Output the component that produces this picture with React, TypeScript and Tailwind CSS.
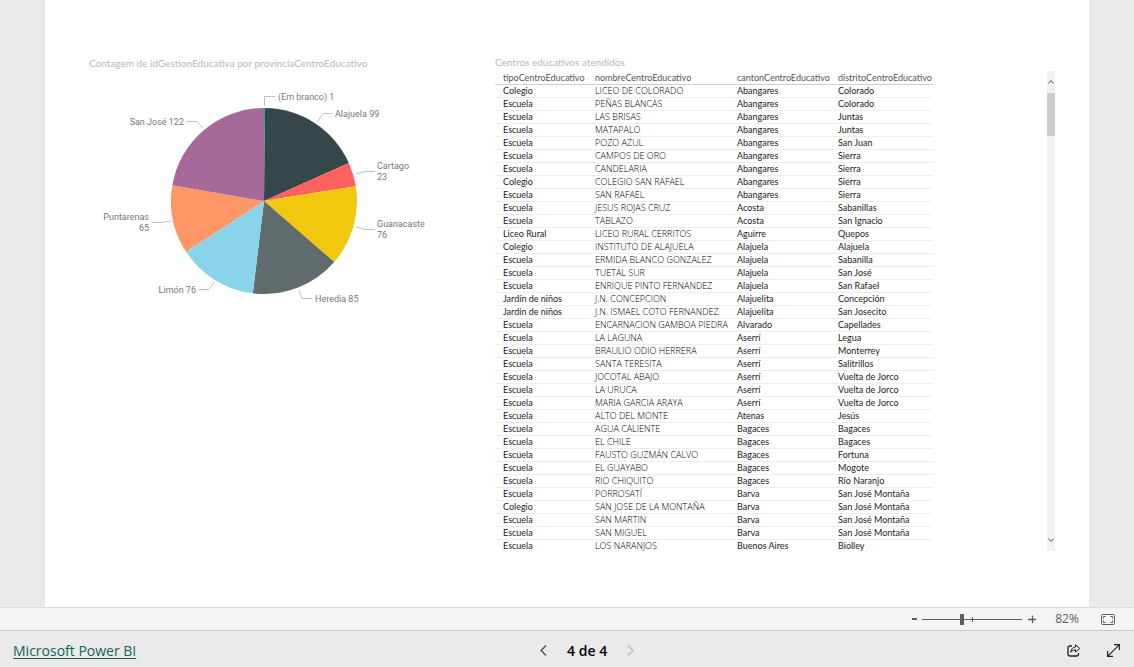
import { useState } from "react";

const slices = [
    { name: "(Em branco)", value: 1, color: "#01b8aa" },
    { name: "Alajuela", value: 99, color: "#374649" },
    { name: "Cartago", value: 23, color: "#fd625e" },
    { name: "Guanacaste", value: 76, color: "#f2c80f" },
    { name: "Heredia", value: 85, color: "#5f6b6d" },
    { name: "Limón", value: 76, color: "#8ad4eb" },
    { name: "Puntarenas", value: 65, color: "#fe9666" },
    { name: "San José", value: 122, color: "#a66999" },
];

// label lines, text position and leader line of every slice
const labels = [
    { lines: ["(Em branco) 1"], x: 189, y: 20, end: false, leader: "175.5,26 175.5,16.5 186,16.5" },
    { lines: ["Alajuela 99"], x: 246, y: 37, end: false, leader: "228,42 234,33.5 243,33.5" },
    { lines: ["Cartago", "23"], x: 288, y: 89, end: false, leader: "267,94 276,91.5 286,91.5" },
    { lines: ["Guanacaste", "76"], x: 288, y: 147, end: false, leader: "267,147 276,149.5 286,149.5" },
    { lines: ["Heredia 85"], x: 226, y: 222, end: false, leader: "210,210 213,218.5 223,218.5" },
    { lines: ["Limón 76"], x: 107, y: 213, end: true, leader: "125,202 120,209.5 110,209.5" },
    { lines: ["Puntarenas", "65"], x: 60, y: 140, end: true, leader: "82,141 73,142.5 63,142.5" },
    { lines: ["San José 122"], x: 95, y: 45, end: true, leader: "114,48 108,41.5 98,41.5" },
];

const columns = [
    { name: "tipoCentroEducativo", width: "w-[92px]" },
    { name: "nombreCentroEducativo", width: "w-[142px]" },
    { name: "cantonCentroEducativo", width: "w-[101px]" },
    { name: "distritoCentroEducativo", width: "w-[103px]" },
];

const rows = [
    ["Colegio", "LICEO DE COLORADO", "Abangares", "Colorado"],
    ["Escuela", "PEÑAS BLANCAS", "Abangares", "Colorado"],
    ["Escuela", "LAS BRISAS", "Abangares", "Juntas"],
    ["Escuela", "MATAPALO", "Abangares", "Juntas"],
    ["Escuela", "POZO AZUL", "Abangares", "San Juan"],
    ["Escuela", "CAMPOS DE ORO", "Abangares", "Sierra"],
    ["Escuela", "CANDELARIA", "Abangares", "Sierra"],
    ["Colegio", "COLEGIO SAN RAFAEL", "Abangares", "Sierra"],
    ["Escuela", "SAN RAFAEL", "Abangares", "Sierra"],
    ["Escuela", "JESUS ROJAS CRUZ", "Acosta", "Sabanillas"],
    ["Escuela", "TABLAZO", "Acosta", "San Ignacio"],
    ["Liceo Rural", "LICEO RURAL CERRITOS", "Aguirre", "Quepos"],
    ["Colegio", "INSTITUTO DE ALAJUELA", "Alajuela", "Alajuela"],
    ["Escuela", "ERMIDA BLANCO GONZALEZ", "Alajuela", "Sabanilla"],
    ["Escuela", "TUETAL SUR", "Alajuela", "San José"],
    ["Escuela", "ENRIQUE PINTO FERNANDEZ", "Alajuela", "San Rafael"],
    ["Jardín de niños", "J.N. CONCEPCION", "Alajuelita", "Concepción"],
    ["Jardín de niños", "J.N. ISMAEL COTO FERNANDEZ", "Alajuelita", "San Josecito"],
    ["Escuela", "ENCARNACION GAMBOA PIEDRA", "Alvarado", "Capellades"],
    ["Escuela", "LA LAGUNA", "Aserrí", "Legua"],
    ["Escuela", "BRAULIO ODIO HERRERA", "Aserrí", "Monterrey"],
    ["Escuela", "SANTA TERESITA", "Aserrí", "Salitrillos"],
    ["Escuela", "JOCOTAL ABAJO", "Aserrí", "Vuelta de Jorco"],
    ["Escuela", "LA URUCA", "Aserrí", "Vuelta de Jorco"],
    ["Escuela", "MARIA GARCIA ARAYA", "Aserrí", "Vuelta de Jorco"],
    ["Escuela", "ALTO DEL MONTE", "Atenas", "Jesús"],
    ["Escuela", "AGUA CALIENTE", "Bagaces", "Bagaces"],
    ["Escuela", "EL CHILE", "Bagaces", "Bagaces"],
    ["Escuela", "FAUSTO GUZMÁN CALVO", "Bagaces", "Fortuna"],
    ["Escuela", "EL GUAYABO", "Bagaces", "Mogote"],
    ["Escuela", "RIO CHIQUITO", "Bagaces", "Río Naranjo"],
    ["Escuela", "PORROSATÍ", "Barva", "San José Montaña"],
    ["Colegio", "SAN JOSE DE LA MONTAÑA", "Barva", "San José Montaña"],
    ["Escuela", "SAN MARTIN", "Barva", "San José Montaña"],
    ["Escuela", "SAN MIGUEL", "Barva", "San José Montaña"],
    ["Escuela", "LOS NARANJOS", "Buenos Aires", "Biolley"],
];

const total = slices.reduce((sum, s) => sum + s.value, 0);
const cx = 175;
const cy = 121;
const radius = 93;

const point = (value: number) => {
    const angle = (value / total) * Math.PI * 2;
    return `${cx + radius * Math.sin(angle)} ${cy - radius * Math.cos(angle)}`;
};

const PieChart = () => {
    let sum = 0;
    return (
        <svg
            width="350"
            height="240"
            role="img"
            aria-label="Contagem de idGestionEducativa por provinciaCentroEducativo"
        >
            {slices.map((s) => {
                const from = point(sum);
                sum += s.value;
                return (
                    <path
                        key={s.name}
                        d={`M${cx} ${cy}L${from}A${radius} ${radius} 0 0 1 ${point(sum)}Z`}
                        fill={s.color}
                    />
                );
            })}
            {labels.map((l) => (
                <g key={l.lines[0]}>
                    <polyline points={l.leader} fill="none" stroke="#c0c0c0" />
                    {l.lines.map((line, i) => (
                        <text
                            key={line}
                            x={l.x}
                            y={l.y + i * 11}
                            textAnchor={l.end ? "end" : "start"}
                            className="fill-[#777777] font-['Roboto',sans-serif] text-[9px]"
                        >
                            {line}
                        </text>
                    ))}
                </g>
            ))}
        </svg>
    );
};

const CentersTable = () => (
    <table className="w-[438px] table-fixed border-collapse text-left font-['Lato',sans-serif] text-[9px] leading-[12px] whitespace-nowrap">
        <thead>
            <tr className="border-b border-[#d0d0d0] text-[#555555]">
                {columns.map((c) => (
                    <th key={c.name} className={`${c.width} p-0 pt-px pl-2 font-normal`}>
                        {c.name}
                    </th>
                ))}
            </tr>
        </thead>
        <tbody className="text-[#222222]">
            {rows.map(([tipo, nombre, canton, distrito]) => (
                <tr key={nombre} className="border-b border-[#eeeeee]">
                    <td className="p-0 pl-2">{tipo}</td>
                    <td className="p-0 pl-2 font-['Open_Sans',sans-serif] font-light text-black">{nombre}</td>
                    <td className="p-0 pl-2">{canton}</td>
                    <td className="p-0 pl-2">{distrito}</td>
                </tr>
            ))}
        </tbody>
    </table>
);

const ScrollBar = () => (
    <div className="flex w-2 flex-col items-center bg-[#f1f1f1] text-[#505050]">
        <svg width="8" height="22" fill="none" stroke="currentColor">
            <path d="M1.5 12.5L4 9.5L6.5 12.5" />
        </svg>
        <div className="h-[43px] w-full bg-[#cdcdcd]" />
        <svg width="8" height="22" fill="none" stroke="currentColor" className="mt-auto">
            <path d="M1.5 9.5L4 12.5L6.5 9.5" />
        </svg>
    </div>
);

const ZoomBar = () => {
    const [zoom, setZoom] = useState(40);
    return (
        <div className="flex h-[23px] items-center justify-end border-t border-[#dcdcdc] bg-[#f4f4f4] pr-[18px] text-[#605e5c]">
            <button aria-label="Reduzir" className="flex h-4 w-4 items-center justify-center">
                <svg width="5" height="2">
                    <rect width="5" height="2" fill="currentColor" />
                </svg>
            </button>
            <div className="relative flex h-4 w-[100px] items-center">
                <input
                    type="range"
                    aria-label="Zoom"
                    value={zoom}
                    onChange={(e) => setZoom(Number(e.target.value))}
                    className="h-px w-full appearance-none bg-[#605e5c] [&::-webkit-slider-thumb]:h-[11px] [&::-webkit-slider-thumb]:w-1 [&::-webkit-slider-thumb]:appearance-none [&::-webkit-slider-thumb]:bg-[#605e5c]"
                />
                {/* 100% mark */}
                <div className="absolute top-[6px] left-1/2 h-[5px] w-px bg-[#605e5c]" />
            </div>
            <button aria-label="Ampliar" className="flex h-4 w-5 items-center justify-center">
                <svg width="8" height="8" fill="none" stroke="currentColor" strokeWidth="1.3">
                    <path d="M0 4.5H8M4.5 0.5V8" />
                </svg>
            </button>
            <span className="w-[50px] text-center text-[12px]">82%</span>
            <button aria-label="Ajustar à página" className="ml-2 flex h-4 w-4 items-center justify-center">
                <svg width="14" height="11" fill="none" stroke="currentColor">
                    <rect x="0.5" y="0.5" width="13" height="10" rx="1" />
                    <path d="M4.5 2.5H2.5V4.5M9.5 2.5H11.5V4.5M2.5 6.5V8.5H4.5M11.5 6.5V8.5H9.5" />
                </svg>
            </button>
        </div>
    );
};

const Footer = () => (
    <footer className="flex h-[37px] items-center justify-between border-t border-[#c8c8c8] bg-[#eaeaea] pt-0.5 pl-[13px]">
        <a href="#" className="text-[14px] text-[#0f6657] underline underline-offset-2">
            Microsoft Power BI
        </a>
        <div className="flex items-center gap-5">
            <button aria-label="Página anterior">
                <svg width="7" height="11" fill="none" stroke="#444444" strokeWidth="1.2">
                    <path d="M6 0.5L1 5.5L6 10.5" />
                </svg>
            </button>
            <span className="text-[14px] font-semibold text-black">4 de 4</span>
            <button aria-label="Próxima página" disabled>
                <svg width="7" height="11" fill="none" stroke="#b8b8b8" strokeWidth="1.2">
                    <path d="M1 0.5L6 5.5L1 10.5" />
                </svg>
            </button>
        </div>
        <div className="flex pl-4 text-[#222222]">
            <button aria-label="Compartilhar" className="flex h-6 w-10 items-center justify-center">
                <svg width="14" height="13" fill="none" stroke="currentColor" strokeLinejoin="round">
                    <path d="M5 2H3Q1 2 1 4V10Q1 12 3 12H9.500Q11.500 12 11.500 10V9" strokeWidth="1.3" />
                    <path d="M8.500 0.700L12.800 4.400L8.500 8V5.800Q5.500 5.600 3.700 8.200Q4.200 3.500 8.500 3Z" />
                </svg>
            </button>
            <button aria-label="Tela inteira" className="flex h-6 w-10 items-center justify-center">
                <svg width="13" height="13" fill="none" stroke="currentColor" strokeWidth="1.2">
                    <path d="M0.600 12.400L12.400 0.600M7 0.600H12.400V6M0.600 7V12.400H6" />
                </svg>
            </button>
        </div>
    </footer>
);

const App = () => {
    return (
        <div className="flex h-screen flex-col bg-[#eaeaea] font-['Open_Sans',sans-serif]">
            <main className="mx-[45px] flex min-h-0 flex-1 bg-white pt-[55px] pr-[34px] pb-14 pl-11">
                <section className="w-[406px]">
                    <h2 className="font-['Lato',sans-serif] text-[10px] leading-[16px] text-[#b8b8b8]">
                        Contagem de idGestionEducativa por provinciaCentroEducativo
                    </h2>
                    <div className="pt-[9px]">
                        <PieChart />
                    </div>
                </section>
                <section className="flex flex-1 flex-col">
                    <h2 className="font-['Lato',sans-serif] text-[10px] leading-[14px] text-[#b8b8b8]">
                        Centros educativos atendidos
                    </h2>
                    <div className="mt-[2px] flex min-h-0 flex-1 justify-between">
                        <div className="overflow-hidden">
                            <CentersTable />
                        </div>
                        <ScrollBar />
                    </div>
                </section>
            </main>
            <ZoomBar />
            <Footer />
        </div>
    );
};

export default App;
